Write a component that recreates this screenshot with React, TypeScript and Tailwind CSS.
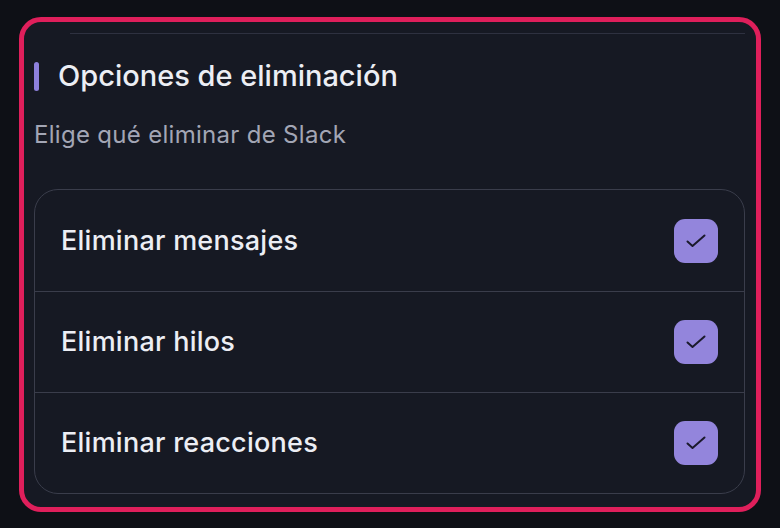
const options = ["Eliminar mensajes", "Eliminar hilos", "Eliminar reacciones"];

const CheckBox = () => (
  <div className="flex h-[44px] w-[44px] items-center justify-center rounded-[11px] bg-[#9385dc]">
    <svg width="20" height="14" viewBox="0 0 20 14" fill="none">
      <path
        d="M1.5 7.5 L6.5 12 L18.5 1.5"
        stroke="#1b1a2c"
        strokeWidth="2"
        strokeLinecap="round"
        strokeLinejoin="round"
      />
    </svg>
  </div>
);

export default function App() {
  return (
    <div
      className="h-[528px] w-[780px] bg-[#0e1016] pl-[19px] pt-[17px]"
      style={{ fontFamily: "Inter, 'Noto Sans', sans-serif" }}
    >
      <div className="h-[495px] w-[742px] overflow-hidden rounded-[22px] border-[5px] border-[#df1f5b] bg-[#161923] pb-[11px] pl-[10px] pr-[11px]">
        {/* faint top edge of the section */}
        <div className="ml-[36px] mt-[11px] h-px bg-[#2e3140]" />

        {/* Heading */}
        <div className="mt-[24px] flex items-center gap-[19px]">
          <div className="h-[29px] w-[5px] rounded-full bg-[#8d80dc]" />
          <h2 className="text-[29px] font-medium leading-[36px] text-[#eceef4]">
            Opciones de eliminación
          </h2>
        </div>
        <p className="mt-[26px] text-[24px] leading-[30px] tracking-[0.3px] text-[#a3a6b5]">
          Elige qué eliminar de Slack
        </p>

        {/* Options list */}
        <div className="mt-[39px] overflow-hidden rounded-[24px] border border-[#3a3d4b]">
          {options.map((label, i) => (
            <div
              key={label}
              className={`flex h-[101px] items-center justify-between pl-[26px] pr-[26px] ${
                i > 0 ? "border-t border-[#3a3d4b]" : ""
              }`}
            >
              <span className="text-[27px] font-medium leading-[32px] tracking-[0.25px] text-[#eceef4]">
                {label}
              </span>
              <CheckBox />
            </div>
          ))}
        </div>
      </div>
    </div>
  );
}
